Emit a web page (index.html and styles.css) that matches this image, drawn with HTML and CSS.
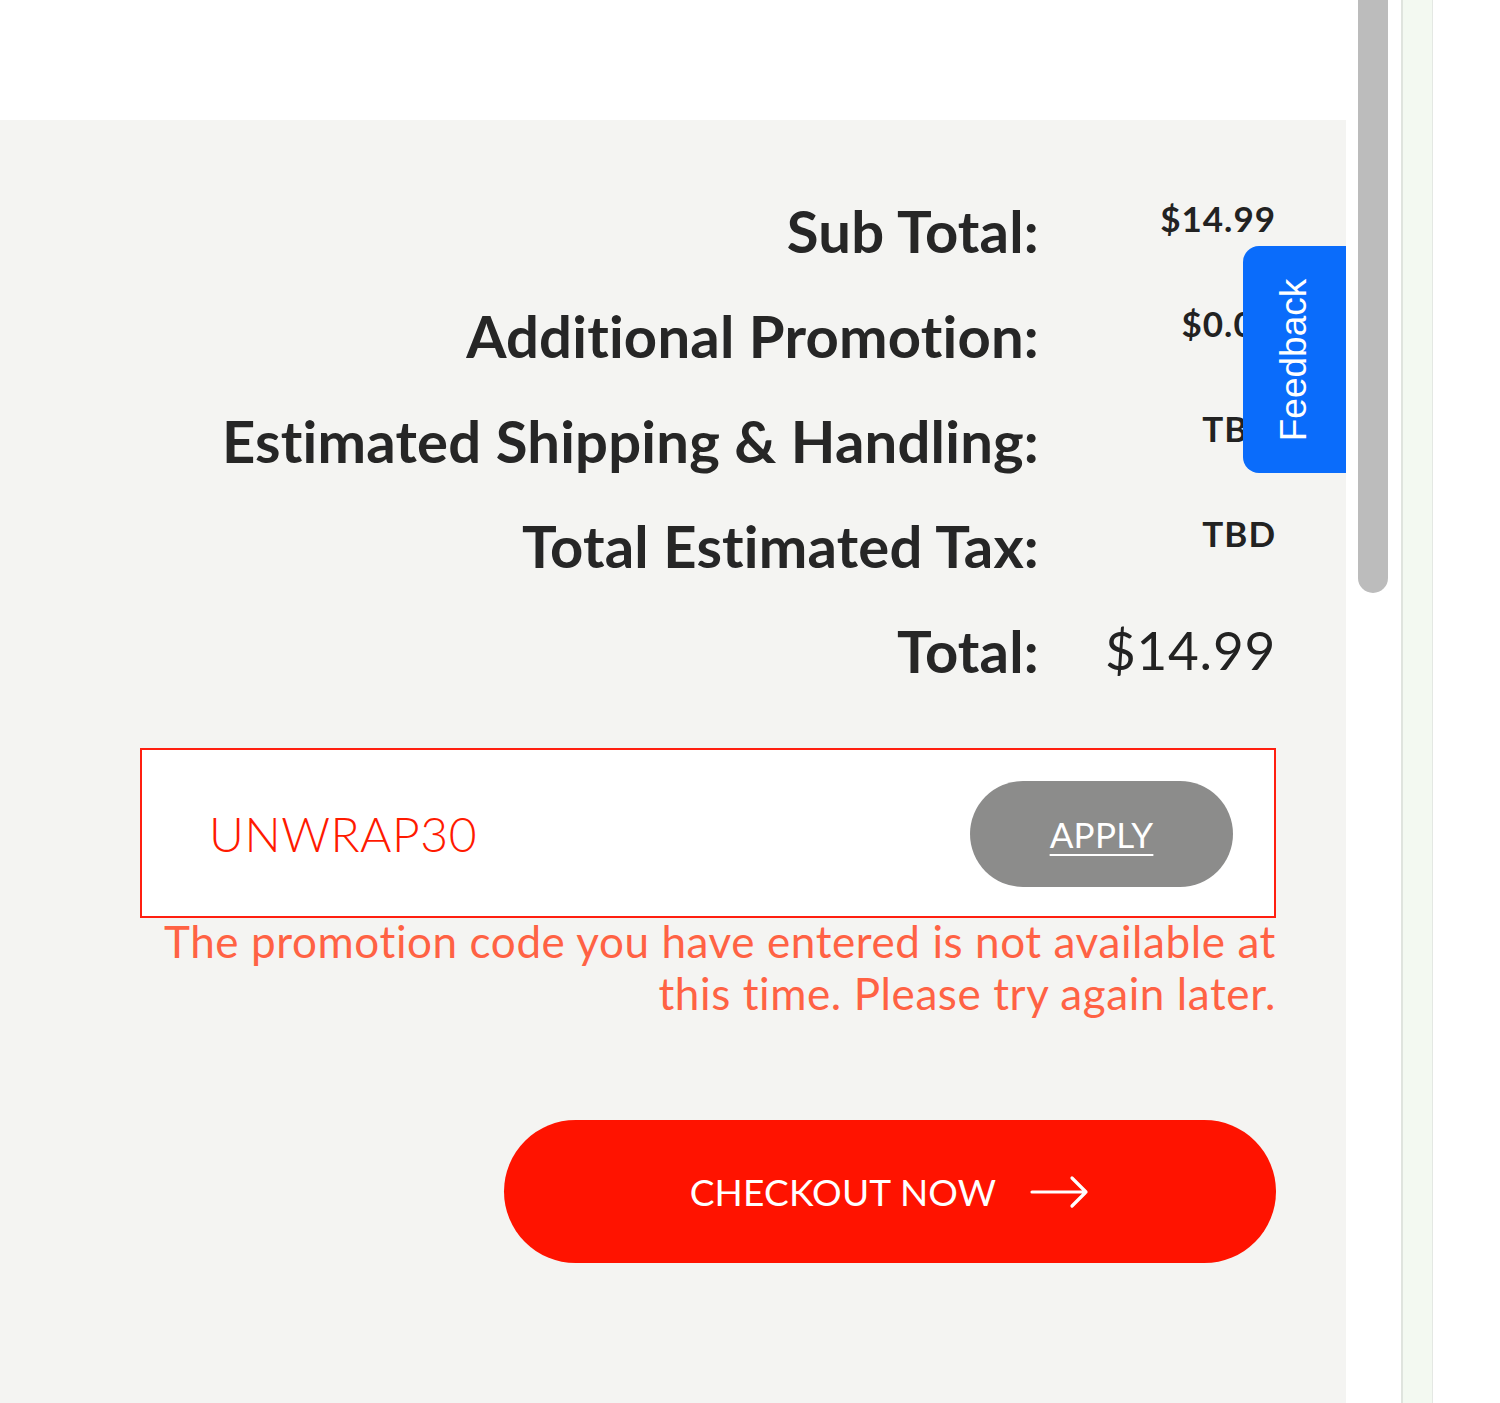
FILE: index.html
```html
<!DOCTYPE html>
<html lang="en">
<head>
<meta charset="utf-8">
<title>Cart summary</title>
<link rel="stylesheet" href="styles.css">
</head>
<body>
<div class="page">
  <div class="main">
    <div class="topbar"></div>
    <div class="panel">
      <div class="totals">
        <div class="label">Sub Total:</div>
        <div class="val">$14.99</div>
        <div class="label">Additional Promotion:</div>
        <div class="val">$0.00</div>
        <div class="label">Estimated Shipping &amp; Handling:</div>
        <div class="val">TBD</div>
        <div class="label">Total Estimated Tax:</div>
        <div class="val">TBD</div>
        <div class="label">Total:</div>
        <div class="val val-total">$14.99</div>
      </div>

      <div class="promo">
        <span class="promo-code">UNWRAP30</span>
        <button class="apply" type="button">APPLY</button>
      </div>
      <p class="promo-error">The promotion code you have entered is not available at<br>this time. Please try again later.</p>

      <div class="checkout-row">
        <button class="checkout" type="button">
          <span>CHECKOUT NOW</span>
          <svg class="arrow" width="60" height="34" viewBox="0 0 60 34" aria-hidden="true">
            <path d="M2 17 H56 M42 3 L56 17 L42 31" fill="none" stroke="#fff" stroke-width="3.2" stroke-linecap="round" stroke-linejoin="round"/>
          </svg>
        </button>
      </div>
    </div>
    <div class="feedback"><span>Feedback</span></div>
  </div>
  <div class="gap-a"></div>
  <div class="scroll"><div class="thumb"></div></div>
  <div class="gap-b"></div>
  <div class="strip"></div>
  <div class="rest"></div>
</div>
</body>
</html>
```

FILE: styles.css
```css
html, body {
  margin: 0;
  padding: 0;
  background: #ffffff;
}

.page {
  display: flex;
  height: 1403px;
  overflow: hidden;
  font-family: Lato, "Noto Sans", sans-serif;
}

.main {
  position: relative;
  width: 1346px;
  flex: none;
  display: flex;
  flex-direction: column;
}

.topbar {
  height: 120px;
  background: #ffffff;
}

.panel {
  flex: 1;
  background: #f4f4f2;
  padding: 58px 70px 0 140px;
}

.totals {
  display: grid;
  grid-template-columns: 1fr 237px;
  grid-auto-rows: 105px;
  align-items: start;
}

.label {
  font-size: 58px;
  font-weight: 700;
  line-height: 105px;
  color: #262626;
  text-align: right;
  white-space: nowrap;
  letter-spacing: 0.2px;
}

.val {
  font-size: 35px;
  font-weight: 700;
  line-height: 41px;
  padding-top: 20px;
  color: #222222;
  text-align: right;
  white-space: nowrap;
  letter-spacing: 1px;
}

.val-total {
  font-size: 53px;
  font-weight: 400;
  line-height: 64px;
  padding-top: 20px;
  letter-spacing: 0.8px;
}

.promo {
  margin-top: 45px;
  height: 166px;
  border: 2px solid #ff1f10;
  background: #ffffff;
  display: flex;
  align-items: center;
  justify-content: space-between;
  padding: 0 41px 0 67px;
}

.promo-code {
  font-size: 48px;
  font-weight: 300;
  color: #ff1a00;
  letter-spacing: 0.5px;
}

.apply {
  width: 263px;
  height: 106px;
  border: none;
  border-radius: 53px;
  background: #8c8c8b;
  color: #ffffff;
  font-family: Lato, "Noto Sans", sans-serif;
  font-size: 35px;
  font-weight: 400;
  letter-spacing: 0.3px;
  text-decoration: underline;
  text-underline-offset: 6px;
  text-decoration-thickness: 2px;
  padding: 0;
  margin-top: 2px;
}

.promo-error {
  margin: -3px 0 0;
  font-size: 44px;
  line-height: 52px;
  font-weight: 400;
  letter-spacing: 0.6px;
  color: #ff6244;
  text-align: right;
  white-space: nowrap;
}

.checkout-row {
  display: flex;
  justify-content: flex-end;
  margin-top: 101px;
}

.checkout {
  width: 772px;
  height: 143px;
  border: none;
  border-radius: 72px;
  background: #ff1300;
  color: #ffffff;
  display: flex;
  align-items: center;
  justify-content: center;
  gap: 34px;
  font-family: Lato, "Noto Sans", sans-serif;
  font-size: 37px;
  font-weight: 400;
  letter-spacing: 0.2px;
  padding: 0;
}

.arrow {
  display: block;
}

.feedback {
  position: absolute;
  top: 246px;
  right: 0;
  width: 103px;
  height: 227px;
  background: #0a6cfb;
  border-radius: 16px 0 0 16px;
  display: flex;
  align-items: center;
  justify-content: center;
}

.feedback span {
  display: block;
  transform: rotate(-90deg);
  font-family: "Liberation Sans", Arial, sans-serif;
  font-size: 37px;
  color: #ffffff;
  white-space: nowrap;
}

.gap-a {
  width: 12px;
  flex: none;
}

.scroll {
  width: 30px;
  flex: none;
}

.thumb {
  height: 593px;
  background: #bcbcbc;
  border-radius: 0 0 15px 15px;
}

.gap-b {
  width: 13px;
  flex: none;
}

.strip {
  width: 29px;
  flex: none;
  background: #f3f9f1;
  border-left: 2px solid #dfe4de;
  border-right: 1px solid #e4e8e3;
}

.rest {
  flex: 1;
}
```
